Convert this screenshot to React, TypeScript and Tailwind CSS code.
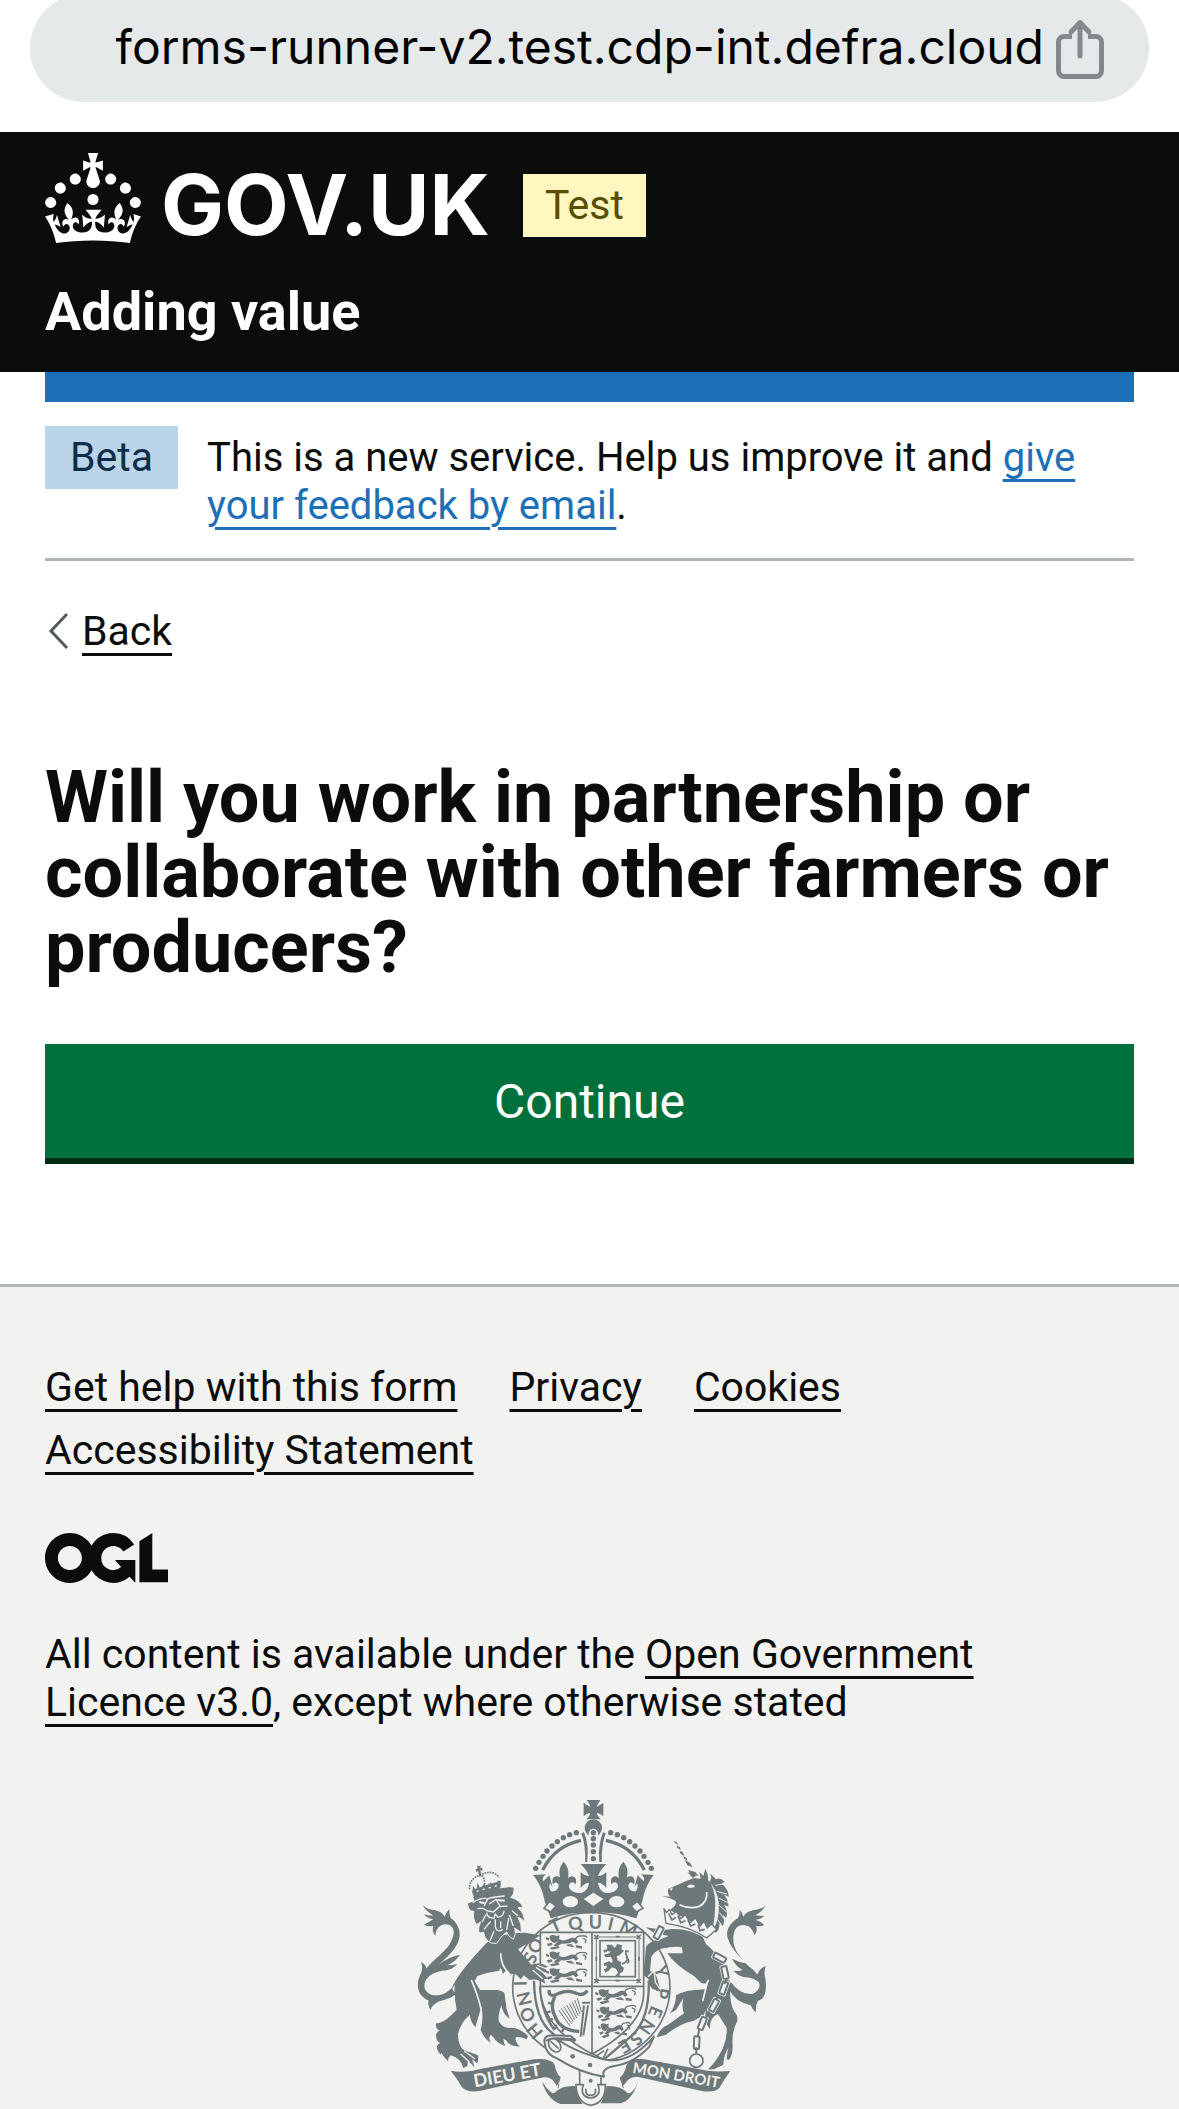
import type { ReactNode } from "react";

const INK = "#6d787a";
const PAPER = "#f2f2f0";

function ShareIcon() {
  return (
    <svg viewBox="0 0 54 64" className="h-[64px] w-[54px]" fill="none" stroke="#84898d" strokeWidth="5" strokeLinecap="round" strokeLinejoin="round" aria-hidden="true">
      <path d="M19 23.500H11a5.500 5.500 0 0 0-5.500 5.500v29a5.500 5.500 0 0 0 5.500 5.500h32a5.500 5.500 0 0 0 5.500-5.500V29a5.500 5.500 0 0 0-5.500-5.500h-8" transform="translate(0 -3)" strokeLinecap="butt" />
      <path d="M27 40V7M18 16l9-9.500 9 9.500" />
    </svg>
  );
}

function Crown() {
  return (
    <svg viewBox="0 0 32 30" className="h-[90px] w-[96px] shrink-0" fill="white" aria-hidden="true">
      <path d="M22.6 10.4c-1 .4-2-.1-2.4-1-.4-.9.1-2 1-2.4.9-.4 2 .1 2.4 1s-.1 2-1 2.4m4.900 3c-1 .4-2-.1-2.4-1-.4-.9.1-2 1-2.4.9-.4 2 .1 2.4 1s0 2-1 2.4m3.3 4.8c-1 .4-2-.1-2.4-1-.4-.9.1-2 1-2.4.9-.4 2 .1 2.4 1s-.1 2-1 2.4M17 4.7l2.3 1.2V2.500l-2.3.7-.2-.2.9-3h-3.4l.9 3-.2.2c-.1.1-2.3-.7-2.3-.7v3.4L15 4.7c.1.1.1.2.2.2l-1.3 4c-.1.2-.1.4-.1.6 0 1.1.8 2 1.9 2.2h.7c1-.2 1.9-1.1 1.9-2.1 0-.2 0-.4-.1-.6l-1.3-4c-.1-.2 0-.2.1-.3m-7.6 5.7c.9.4 2-.1 2.4-1 .4-.9-.1-2-1-2.4-.9-.4-2 .1-2.4 1s0 2 1 2.4m-5 3c.9.4 2-.1 2.4-1 .4-.9-.1-2-1-2.4-.9-.4-2 .1-2.4 1s.1 2 1 2.4m-3.2 4.8c.9.4 2-.1 2.4-1 .4-.9-.1-2-1-2.4-.9-.4-2 .1-2.4 1s0 2 1 2.4m14.800 11c4.4 0 8.6.3 12.3.8 1.1-4.500 2.4-7 3.7-8.800l-2.500-.9c.2 1.3.3 1.9 0 2.7-.4-.4-.8-1.1-1.1-2.3l-1.2 4c.7-.5 1.3-.8 2-.9-1.1 2.500-2.6 3.1-3.500 3-1.1-.2-1.7-1.2-1.500-2.1.3-1.2 1.500-1.500 2.1-.1 1.1-2.3-.8-3-2-2.3 1.9-1.9 2.1-3.500.6-5.6-2.1 1.6-2.1 3.2-1.2 5.500-1.2-1.4-3.2-.6-2.500 1.6.9-1.4 2.1-.5 1.9.8-.2 1.1-1.7 2.1-3.500 1.9-2.7-.2-2.9-2.1-2.9-3.6.7-.1 1.9.5 2.9 1.9l.4-4.3c-1.1 1.1-2.1 1.4-3.2 1.4.4-1.2 2.1-3 2.1-3h-5.4s1.7 1.9 2.1 3c-1.1 0-2.1-.2-3.2-1.4l.4 4.3c1-1.4 2.2-2 2.9-1.9-.1 1.500-.2 3.4-2.9 3.6-1.9.2-3.4-.8-3.500-1.9-.2-1.3 1-2.2 1.9-.8.7-2.3-1.2-3-2.500-1.6.9-2.2.9-3.9-1.2-5.500-1.500 2-1.3 3.7.6 5.6-1.2-.7-3.1 0-2 2.3.6-1.4 1.8-1.1 2.1.1.2.9-.3 1.9-1.500 2.1-.9.2-2.4-.5-3.500-3 .6 0 1.2.3 2 .9l-1.2-4c-.3 1.1-.7 1.9-1.1 2.3-.3-.8-.2-1.4 0-2.7l-2.900.9C1.300 23 2.600 25.500 3.700 30c3.700-.5 7.900-.8 12.300-.8" />
      <circle cx="16" cy="15.500" r="1.850" />
    </svg>
  );
}

function LicenceLogo() {
  return (
    <svg viewBox="0 0 483.2 195.7" className="h-[50px] w-[123px]" fill="#0b0c0c" role="img" aria-label="Open Government Licence">
      <path d="M421.5 142.8V.1l-50.7 32.3v161.1h112.4v-50.7zm-122.3-9.6A47.12 47.12 0 0 1 221 97.8c0-26 21.1-47.1 47.1-47.1 16.7 0 31.4 8.7 39.7 21.8l42.7-27.2A97.63 97.63 0 0 0 268.1 0c-36.5 0-68.3 20.1-85.1 49.7A98 98 0 0 0 97.8 0C43.9 0 0 43.9 0 97.8s43.9 97.8 97.8 97.8c36.5 0 68.3-20.1 85.1-49.7a97.76 97.76 0 0 0 149.6 25.4l19.4 22.2h3v-87.8h-80l24.3 27.5zM97.8 145c-26 0-47.1-21.1-47.1-47.1s21.1-47.1 47.1-47.1 47.1 21.1 47.1 47.1S123.8 145 97.8 145" />
    </svg>
  );
}

const arcBeads: [number, number][] = [
  [527, 158], [507, 164], [488, 173], [470, 185], [454, 198], [439, 213], [427, 229], [415, 247], [405, 265],
];

/* One side of the large crown; the other side is its mirror image. */
function CrownHalf() {
  return (
    <g>
      {arcBeads.map(([x, y]) => (
        <circle key={x} cx={x} cy={y} r="8" fill={INK} />
      ))}
      <path d="M426 270C450 222 490 192 541 181" fill="none" stroke={INK} strokeWidth="10" />
      <path d="M546 158Q560 195 558 246" fill="none" stroke={INK} strokeWidth="9" />
      <path
        fill={INK}
        d="M579 252H540C552 264 561 276 565 288C556 288 548 284 540 276V324C548 314 556 308 565 308C563 328 551 340 533 339C518 338 506 330 505 318C505 306 520 302 524 314C532 296 518 280 502 294C506 276 502 260 489 245C476 260 474 276 479 293C464 282 450 294 457 313C463 304 474 306 474 318C472 330 462 336 451 334C446 326 444 320 448 310L456 322L446 286L428 304C424 296 428 288 436 283L397 285C414 305 426 330 432 364L450 415Q510 396 579 397Z"
      />
      <ellipse cx="509" cy="365" rx="23" ry="17" fill={PAPER} />
      <path d="M447 364L466 378L450 396L430 385Z" fill={PAPER} stroke={INK} strokeWidth="5" />
    </g>
  );
}

/* Small walking lion used in the English quarters. */
function Passant({ x, y, w = 1 }: { x: number; y: number; w?: number }) {
  return (
    <g transform={`translate(${x} ${y}) scale(${w} 1)`} fill={INK}>
      <path d="M12 2Q22-3 32 3L40 1L38 12Q36 20 26 24Q14 20 12 10Z" />
      <path d="M38 12Q50 20 62 13Q76 4 86 12L92 22L84 27L78 20Q64 28 44 26L34 34L22 32L30 24Z" />
      <path d="M2 6l9 4-2 7-7-4zM4 26l14-3 2 6-12 5zM12 38l24-5 4 6-22 5zM56 29l16-2 10 10-18-3zM84 30l18 4v7l-16-3z" />
      <path d="M84 12Q88 1 101 3Q112 0 116 8M104 10Q118 12 110 24" fill="none" stroke={INK} strokeWidth="4" />
    </g>
  );
}

type Glyph = [string, number, number, number];

const motto: Glyph[] = [
  /* letter, centre x, centre y, rotation */
  ["H", 401, 754, 50], ["O", 380, 704, 62], ["N", 370, 656, 76], ["I", 358, 610, 88],
  ["S", 388, 534, 112], ["O", 404, 497, 125],
  ["T", 464, 436, -24], ["Q", 524, 430, -9], ["U", 584, 427, 0], ["I", 630, 432, 13], ["M", 684, 446, 24],
  ["Y", 782, 574, 74], ["P", 784, 640, 98], ["E", 764, 696, 112], ["N", 738, 740, 125], ["S", 706, 776, 138], ["E", 672, 798, 150],
];

function Chain() {
  const links: [number, number, number][] = [
    [774, 458, -62], [957, 533, 28], [973, 578, 78], [969, 624, 110], [940, 676, 118], [905, 730, 112], [888, 788, 92],
  ];
  return (
    <g>
      {links.map(([x, y, r]) => (
        <g key={y} transform={`translate(${x} ${y}) rotate(${r})`}>
          <rect x="-24" y="-13" width="48" height="26" rx="5" fill={PAPER} />
          <rect x="-19" y="-8" width="38" height="16" rx="3" fill="none" stroke={INK} strokeWidth="6" />
        </g>
      ))}
      <path d="M979 596l-8 16M953 646l-8 14M925 694l-8 18M896 746l-5 26M887 802v20" stroke={INK} strokeWidth="6" />
      <circle cx="887" cy="842" r="20" fill={PAPER} stroke={INK} strokeWidth="5" />
    </g>
  );
}

function Lion() {
  return (
    <g>
      {/* tail */}
      <path fill={INK} d="M66 374Q78 388 101 390Q123 394 132 410Q136 398 146 387Q145 402 150 414C172 430 180 452 176 474C170 504 142 530 112 556Q142 530 178 524Q162 548 138 556Q158 556 170 552Q154 572 124 572Q92 578 78 596C62 620 76 645 105 646C126 646 140 638 152 624L166 642C140 664 118 658 106 670Q94 676 90 690Q80 674 84 662C52 650 44 616 58 586Q70 564 60 546Q76 552 77 566C92 544 130 518 146 494C162 468 164 446 148 436C128 426 106 438 104 468Q92 452 98 438Q80 440 70 434Q88 424 98 418Q76 414 70 402Q86 408 98 406Q76 394 66 374Z" />
      {/* body and legs */}
      <path fill={INK} d="M258 488Q300 458 372 458L420 466L352 508L392 554Q420 544 442 560Q428 562 438 574L428 580L441 596L430 598L434 612Q412 594 386 600L370 586L360 598Q340 570 328 588L318 570L306 582Q300 554 296 572Q262 576 230 588L222 604L238 630H290Q314 634 312 646L318 688L327 716Q308 706 302 676Q292 704 294 722Q300 740 326 744Q350 738 382 768L378 778Q348 766 344 774Q346 790 358 800Q324 798 318 782L308 776Q308 786 314 798Q286 788 280 774L270 764Q262 774 270 788Q250 776 240 750Q250 710 242 680L224 742Q208 724 208 704Q180 726 172 762Q172 798 190 810L232 826Q234 838 230 850L214 838L222 862L202 842L200 858L188 864Q180 834 150 826Q142 832 142 844Q128 830 122 818L120 824Q104 806 110 796L118 788Q106 784 106 764Q110 752 118 752Q104 748 106 730Q120 730 140 716L168 690Q160 650 162 614L150 636Q156 596 258 488Z" />
      <path d="M212 600Q230 640 242 690M300 520Q300 560 330 585" stroke={PAPER} strokeWidth="5" fill="none" />
      <path d="M396 570l30 26M406 562l28 20M410 556l26 10M180 822l26 24M190 812l32 24" stroke={PAPER} strokeWidth="4" fill="none" />
      {/* mane and face */}
      <path fill={INK} stroke={PAPER} strokeWidth="3" d="M200 370L220 362L216 352Q270 324 326 320L340 322Q342 342 330 352Q360 360 368 384Q356 380 352 384Q370 396 372 426Q360 412 352 412Q364 432 362 458Q350 450 342 444Q348 462 338 478Q322 470 318 456Q304 464 288 490Q256 494 248 456Q240 462 234 456Q232 440 240 426L228 434Q214 416 220 394Q204 396 200 370Z" />
      <path d="M216 368Q240 352 260 356M262 356L250 378M262 356Q280 350 312 348M266 372L286 358L298 378M230 386Q250 382 258 392L278 396L296 380L320 378M258 398Q260 416 280 414L284 402L292 412Q310 408 310 392M284 418V440Q288 460 306 448M300 424V444M244 426L256 404M250 448L270 424M318 450L324 414M338 438L326 404M352 408L334 392M268 482L280 454" stroke={PAPER} strokeWidth="4" fill="none" />
      <path d="M236 366l16 4M290 360l22 2" stroke={PAPER} strokeWidth="6" />
      {/* crown */}
      <path d="M214 332Q260 312 300 304L300 322Q258 332 222 354Z" fill={INK} />
      <path d="M215 338l2-20 10 12 4-22 8 20 12-18 8 16 10-20 6 18 14-14 2-8 8 0-2 26-76 24z" fill={INK} />
      <path d="M228 334l6-2M246 329l6-2M264 324l6-2M282 319l6-2" stroke={PAPER} strokeWidth="4" />
      <path d="M207 328Q204 298 236 286Q274 266 296 292M244 286Q252 296 252 312" stroke={INK} strokeWidth="5" strokeDasharray="5 3" fill="none" />
      <path d="M229 256l6 3 5-3-1 8 6-1v9l-6-1 4 17-7 2-4-17-5 3-2-9 6-1z" fill={INK} />
    </g>
  );
}

function Unicorn() {
  return (
    <g>
      {/* tail */}
      <path fill={INK} d="M1095 376Q1084 388 1060 390Q1036 394 1028 410Q1026 398 1017 389Q1018 404 1012 414C986 430 976 452 980 470C986 496 1014 530 1046 560Q1060 568 1070 584Q1076 566 1095 558Q1088 578 1095 600C1098 640 1092 656 1072 662Q1064 674 1066 698Q1056 690 1050 676Q1006 668 984 628L990 606Q1020 646 1056 642Q1084 626 1074 606Q1060 594 1036 592Q1014 590 998 572Q1016 574 1026 570Q1006 560 994 536Q1014 546 1034 550C1010 520 996 502 998 470C1000 444 1014 432 1034 436Q1054 440 1062 466Q1072 450 1066 438Q1080 440 1090 436Q1082 424 1064 420Q1084 416 1090 408Q1076 408 1064 406Q1084 396 1095 376Z" />
      {/* body and legs */}
      <path fill={INK} d="M735 442L790 450Q850 438 906 470L916 492Q950 520 968 556L990 612Q984 660 1000 694Q1012 706 1010 722Q992 756 996 798Q996 828 984 840L978 838Q980 812 984 802Q968 828 968 854L940 868H922Q946 846 966 806Q980 776 978 744L952 702Q926 712 928 748L916 730Q912 706 916 690L908 706L880 722Q836 730 796 764L768 772Q778 744 800 736L850 700Q842 682 848 654L826 690L808 700Q826 676 826 646Q850 630 912 628L920 610Q896 612 888 602L880 588Q824 556 800 520L846 520L840 502L800 504Q770 502 752 530L748 574Q758 572 768 590L780 632L756 628Q742 612 744 598L728 584L736 500Q752 480 780 478L804 468L760 458Z" />
      <path d="M802 504Q838 500 842 504L844 518" stroke={PAPER} strokeWidth="4" fill="none" />
      <path d="M878 590L912 622L924 600M920 606L906 664" stroke={PAPER} strokeWidth="5" fill="none" />
      <path d="M742 590L760 572L764 606L780 630" stroke={PAPER} strokeWidth="4" fill="none" />
      {/* head */}
      <path fill={INK} d="M784 348L810 350Q798 342 803 326L832 314Q862 300 880 294L900 296L896 276L908 288L914 266Q924 286 922 300Q942 320 944 370Q944 410 936 448L892 436L840 408L808 390Q832 372 824 362L806 354Z" />
      <path fill={INK} d="M926 306Q936 296 928 280L946 298Q960 290 972 306Q966 308 962 310Q984 328 984 350L970 344Q984 360 983 380L970 374Q984 396 976 414L966 404Q974 424 966 438L956 430Q958 448 946 458L938 450Q958 410 954 368Q950 330 926 306Z" />
      <path d="M944 316l24-4M948 334l30 8M954 354l28 14M956 376l22 20M956 398l16 20M950 418l12 16" stroke={PAPER} strokeWidth="3" />
      <path d="M836 374Q866 388 894 380Q922 366 918 336" stroke={PAPER} strokeWidth="5" fill="none" />
      <path d="M858 320Q870 308 884 318Q874 328 858 320ZM806 328l10-6-2 10z" fill={PAPER} />
      <path d="M862 270l22 6 10 12-24-4zM860 276l26 12-10 6zM852 240l16 8 8 14-16-6zM848 228l10 6 2 8-10-6zM836 212l10 4 6 12-12-6zM828 196l10 6 2 8-10-6zM820 182l8 4 4 8-8-4z" fill={INK} />
      {/* coronet collar */}
      <path d="M790 386L796 430Q870 440 918 474L948 448L932 432L920 444L910 424L898 438L884 414L868 428L854 404L840 416L828 394L814 404L806 388L798 398Z" fill={PAPER} stroke={INK} strokeWidth="4" strokeLinejoin="round" />
      <path d="M804 400l10 20 12-8M832 408l8 20 14-6M862 420l8 18 14-6M892 434l6 18 14-4" stroke={INK} strokeWidth="5" fill="none" />
    </g>
  );
}

function Shield() {
  const strings: ReactNode[] = [];
  for (let i = 0; i < 8; i += 1) {
    strings.push(<path key={i} d={`M${474 + i * 8} ${690 - i * 5}L${508 + i * 5} ${738 - i * 6}`} stroke={INK} strokeWidth="3" />);
  }
  return (
    <g>
      <ellipse cx="572" cy="622" rx="236" ry="224" fill={PAPER} stroke={INK} strokeWidth="5" />
      <path d="M400 602Q402 720 456 760L486 790M744 602Q748 720 690 770L610 838M418 620Q424 704 462 750" stroke={INK} strokeWidth="7" fill="none" />
      {motto.map(([c, x, y, r]) => (
        <text key={`${c}${x}`} x={x} y={y + 19} fontSize="54" fontFamily="Lato, sans-serif" fontWeight="700" fill={INK} textAnchor="middle" transform={`rotate(${r} ${x} ${y})`}>
          {c}
        </text>
      ))}
      <path d="M419 457H729V640Q728 740 574 822Q420 740 419 620Z" fill={PAPER} stroke={INK} strokeWidth="5" />
      <path d="M574 457V822M419 619H729" stroke={INK} strokeWidth="5" />
      <Passant x={434} y={465} w={1.08} />
      <Passant x={434} y={515} w={1.08} />
      <Passant x={434} y={565} w={1.08} />
      <g transform="rotate(-4 640 700)">
        <Passant x={586} y={626} w={1.08} />
        <Passant x={586} y={678} w={1.04} />
        <Passant x={588} y={728} w={0.85} />
      </g>
      {/* Scottish quarter */}
      <rect x="587" y="471" width="128" height="130" fill="none" stroke={INK} strokeWidth="3" />
      <rect x="598" y="482" width="106" height="108" fill="none" stroke={INK} strokeWidth="5" />
      <path d="M581 465l12 12M593 465l-12 12M708 465l12 12M720 465l-12 12M581 597l12 12M593 597l-12 12M708 597l12 12M720 597l-12 12M645 470h12M645 602h12M587 530v12M715 530v12" stroke={INK} strokeWidth="5" />
      <path fill={INK} d="M618 494l16 0 8 10 8-12 14 4-2 12 8 4-12 12-10 6 4 12 10 4-2 10 10 8-4 12-8 4-2 8h-12l8-10-6-12-12-4-10 10-10 6-4-10 8-4 0-8-8 2 0-8 16-6 8 6 2-10-6-10-16 2-4-8 16-4 4-6-10 0-10 4-2-8 12-2z" />
      <path d="M664 552Q688 544 676 522Q672 506 684 516M676 530q14 12 4 20" stroke={INK} strokeWidth="5" fill="none" />
      {/* harp */}
      <path d="M446 630Q442 648 462 646Q500 626 526 640Q548 650 560 632M462 650Q446 680 466 716Q484 752 536 754" fill="none" stroke={INK} strokeWidth="10" />
      <path d="M544 668h24M550 676L540 770M562 676L548 766" stroke={INK} strokeWidth="6" fill="none" />
      <path d="M454 672l-12-4M450 694l-12 4M456 716l-10 8M468 734l-6 12M488 746l-4 10" stroke={INK} strokeWidth="7" />
      {strings}
    </g>
  );
}

function Belt() {
  return (
    <g>
      <path d="M432 790Q426 766 458 766L510 768L524 780Q486 772 472 780Q540 824 620 840Q690 850 760 770L746 800Q700 850 640 858Q600 866 610 890Q540 880 470 836Q436 824 432 790Z" fill={PAPER} stroke={INK} strokeWidth="6" strokeLinejoin="round" />
      <path d="M434 784Q440 764 520 776L524 786Q480 778 470 784Z" fill={INK} />
      <ellipse cx="462" cy="796" rx="16" ry="22" transform="rotate(-38 462 796)" fill={PAPER} stroke={INK} strokeWidth="5" />
      <path d="M450 784l24 22" stroke={INK} strokeWidth="5" />
      <circle cx="516" cy="829" r="7" fill={INK} />
      <circle cx="568" cy="855" r="7" fill={INK} />
      <path d="M574 820L606 838L622 806M590 826l20-14" stroke={INK} strokeWidth="5" fill="none" />
      <path d="M537 872V916M601 886V916" stroke={INK} strokeWidth="5" />
      <circle cx="570" cy="902" r="6" fill={INK} />
    </g>
  );
}

function Banner() {
  return (
    <g>
      <path d="M460 940Q480 916 524 918Q528 950 546 972H480Q440 960 424 904Q446 940 460 940ZM682 940Q660 916 618 918Q612 950 600 970H660Q696 960 712 904Q700 940 682 940Z" fill={INK} />
      <path d="M150 872Q180 878 216 872Q330 850 400 838Q450 834 462 854Q466 880 480 892Q478 908 468 918Q456 890 430 892Q330 912 240 932Q200 940 184 922Q170 896 150 872ZM989 873Q950 876 920 872Q810 852 730 838Q690 834 678 854Q672 882 657 893Q660 908 668 918Q682 890 710 890Q810 912 900 932Q940 940 956 924Q972 896 989 873Z" fill={INK} />
      <path d="M462 906Q480 908 472 924M676 906Q660 908 668 924" stroke={INK} strokeWidth="3" fill="none" />
      <path d="M526 914H548Q536 950 570 954Q604 950 592 914H614Q616 968 570 976Q528 968 526 914Z" fill={PAPER} stroke={INK} strokeWidth="5" />
      <path d="M556 926Q552 946 570 946Q588 946 584 926" stroke={INK} strokeWidth="5" fill="none" />
      <g fill={PAPER} fontFamily="Lato, sans-serif" fontWeight="700">
        <text x="222" y="922" fontSize="54" transform="rotate(-10 222 922)">DIEU ET</text>
        <text x="694" y="878" fontSize="45" transform="rotate(10 694 878)">MON DROIT</text>
      </g>
    </g>
  );
}

function RoyalArms() {
  return (
    <svg viewBox="34 60 1068 927" className="mx-auto block h-[309px] w-[356px]" role="img" aria-label="Royal coat of arms">
      <Shield />
      <CrownHalf />
      <g transform="translate(1157 0) scale(-1 1)"><CrownHalf /></g>
      <path d="M578 338L608 357L578 378L549 357Z" fill={PAPER} />
      <path d="M558 60H599Q590 74 588 80Q598 76 608 68V108Q598 100 588 98Q590 108 600 118H557Q568 108 569 98Q558 100 549 108V68Q558 76 569 80Q568 74 558 60Z" fill={INK} />
      <circle cx="578" cy="144" r="26" fill={INK} />
      <path d="M560 246Q562 190 564 158Q568 146 578 146Q588 146 592 158Q594 190 596 246Z" fill={PAPER} />
      {[158, 176, 195, 215, 236].map((y) => <circle key={y} cx="578" cy={y} r="8" fill={INK} />)}
      <Lion />
      <Unicorn />
      <Chain />
      <Belt />
      <Banner />
    </svg>
  );
}

const linkStyle = "underline decoration-[3px] underline-offset-[8px]";

export default function App() {
  return (
    <div className="min-h-screen bg-white font-['Roboto',sans-serif] text-[#0b0c0c]">
      <div className="flex h-[132px] items-start overflow-hidden px-[30px]">
        <div className="-mt-[6px] flex h-[108px] flex-1 items-center justify-end gap-[9px] rounded-full bg-[#e6e9ea] pr-[42px]">
          <span className="pb-[2px] font-['Inter',sans-serif] text-[48px] leading-[60px] whitespace-nowrap text-black">forms-runner-v2.test.cdp-int.defra.cloud</span>
          <button type="button" aria-label="Share"><ShareIcon /></button>
        </div>
      </div>

      <header className="h-[240px] bg-[#0b0c0c] px-[45px] pt-[21px] text-white">
        <div className="flex items-start">
          <a href="#home" className="flex items-start gap-[20px]" aria-label="GOV.UK">
            <Crown />
            <span className="pt-[7px] font-['Inter',sans-serif] text-[84px] leading-[90px] font-bold">GOV.UK</span>
          </a>
          <strong className="mt-[21px] ml-[33px] bg-[#fff7bf] px-[22px] pt-[7px] pb-[8px] text-[41px] leading-[48px] font-normal text-[#594d00]">Test</strong>
        </div>
        <a href="#service" className="mt-[32px] block text-[54px] leading-[60px] font-bold">Adding value</a>
      </header>

      <div className="px-[45px]">
        <div className="h-[30px] bg-[#1d70b8]" />
        <div className="flex items-start gap-[29px] border-b-[3px] border-[#b1b4b6] pt-[24px] pb-[28px]">
          <strong className="bg-[#bbd4ea] px-[25px] pt-[7px] pb-[8px] text-[41px] leading-[48px] font-normal text-[#0c2d4a]">Beta</strong>
          <p className="pt-[8px] text-[40px] leading-[48px]">
            This is a new service. Help us improve it and{" "}
            <a href="#feedback" className={`${linkStyle} text-[#1d70b8]`}>give<br />your feedback by email</a>.
          </p>
        </div>
        <a href="#back" className="mt-[46px] flex w-fit items-center gap-[13px] text-[41px] leading-[48px]">
          <svg viewBox="0 0 24 40" className="h-[40px] w-[24px]" fill="none" stroke="#505a5f" strokeWidth="3" aria-hidden="true">
            <path d="M22 3L6 20l16 17" />
          </svg>
          <span className={linkStyle}>Back</span>
        </a>
        <main className="pt-[105px] pb-[120px]">
          <h1 className="text-[72px] leading-[75px] font-bold">Will you work in partnership or collaborate with other farmers or producers?</h1>
          <button type="button" className="mt-[59px] block w-full border-b-[6px] border-[#002d18] bg-[#00703c] pt-[28px] pb-[26px] text-[48px] leading-[60px] text-white">Continue</button>
        </main>
      </div>

      <footer className="border-t-[3px] border-[#b1b4b6] bg-[#f2f2f0] px-[45px] pt-[76px] text-[41px] leading-[48px]">
        <ul className="flex flex-wrap gap-x-[52px] gap-y-[15px]">
          {["Get help with this form", "Privacy", "Cookies", "Accessibility Statement"].map((label) => (
            <li key={label}><a href="#footer" className={linkStyle}>{label}</a></li>
          ))}
        </ul>
        <div className="mt-[59px]"><LicenceLogo /></div>
        <p className="mt-[47px] mb-[74px]">
          All content is available under the <a href="#licence" className={linkStyle}>Open Government<br />Licence v3.0</a>, except where otherwise stated
        </p>
        <RoyalArms />
      </footer>
    </div>
  );
}
